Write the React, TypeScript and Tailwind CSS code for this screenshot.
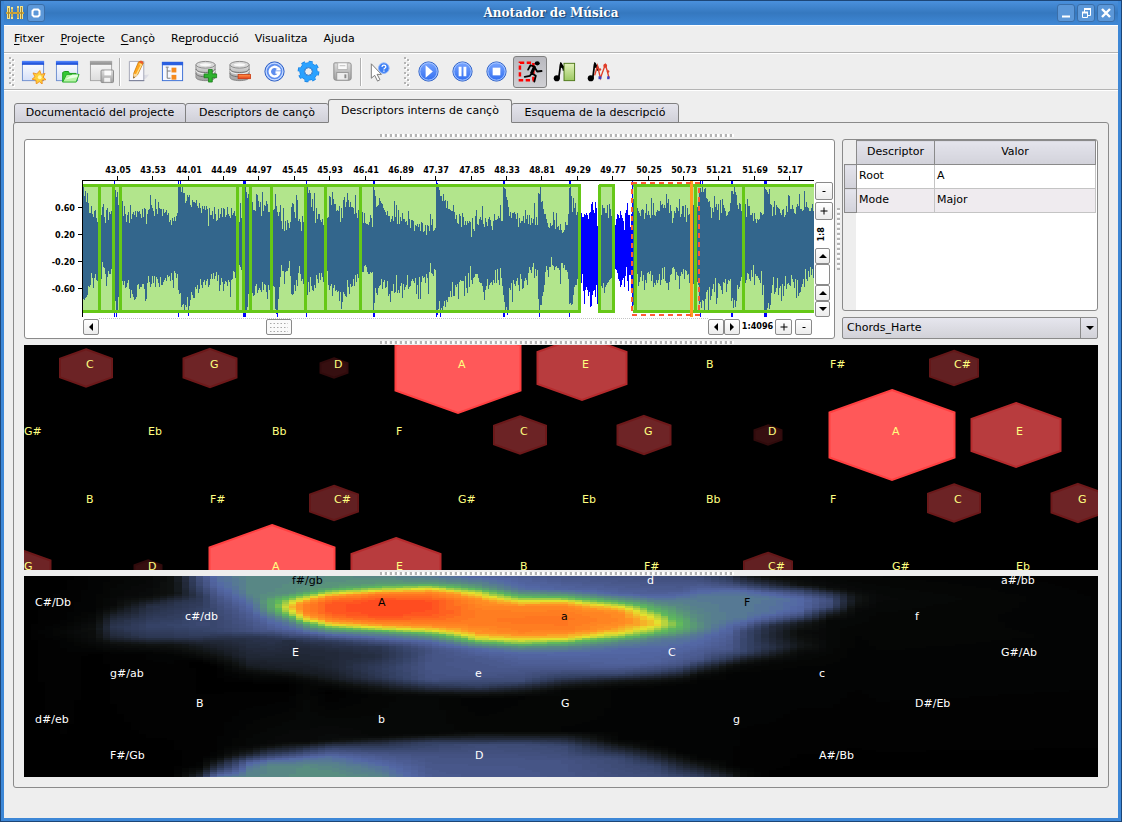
import type { ReactNode } from "react";

const MENUS: [string, string, string][] = [
  ["", "F", "itxer"],
  ["", "P", "rojecte"],
  ["", "C", "ançò"],
  ["Re", "p", "roducció"],
  ["Visualitza", "", ""],
  ["Ajuda", "", ""],
];

const TABS = [
  { label: "Documentació del projecte", width: "w-[172px]" },
  { label: "Descriptors de cançò", width: "w-[144px]" },
  { label: "Descriptors interns de cançò", width: "w-[184px]" },
  { label: "Esquema de la descripció", width: "w-[168px]" },
];
const ACTIVE_TAB = 2;

const DESCRIPTORS = [
  { name: "Root", value: "A" },
  { name: "Mode", value: "Major" },
];

/* ---------- waveform ---------- */

const WAVE_MID = 109;

// x, top, bottom of the signal envelope
const ENVELOPE: [number, number, number][] = [
  [58, 50, 164], [62, 56, 152], [67, 72, 143], [75, 76, 132], [88, 74, 135],
  [90, 44, 166], [92, 56, 172], [94, 58, 155], [98, 70, 145], [108, 74, 160], [114, 74, 148],
  [125, 66, 143], [140, 72, 143], [150, 82, 135], [152, 74, 134],
  [153, 42, 150], [156, 46, 170], [165, 60, 160], [175, 66, 146], [190, 74, 140], [203, 68, 144],
  [212, 78, 134], [218, 76, 135], [220, 40, 176], [224, 62, 152], [237, 64, 152],
  [247, 68, 146], [250, 60, 170], [252, 70, 172], [256, 82, 132], [266, 64, 156],
  [275, 76, 137], [280, 74, 150], [281, 40, 162], [285, 58, 150], [292, 74, 142], [300, 80, 138],
  [304, 58, 150], [314, 70, 165], [318, 58, 160], [324, 64, 150], [335, 74, 135],
  [346, 80, 130], [348, 40, 176], [350, 60, 155], [358, 66, 145], [365, 76, 152], [380, 80, 147],
  [400, 86, 142], [410, 84, 134], [411, 42, 176], [416, 54, 174], [424, 62, 160],
  [435, 80, 142], [450, 82, 140], [465, 80, 147], [477, 76, 142],
  [478, 40, 160], [480, 42, 176], [484, 70, 152], [495, 76, 140], [505, 78, 134],
  [513, 56, 165], [515, 44, 172], [520, 78, 134], [535, 84, 128], [543, 70, 147],
  [544, 42, 176], [547, 56, 160], [553, 76, 142], [558, 74, 154], [565, 60, 166],
  [573, 72, 148], [579, 66, 150], [587, 74, 136], [595, 72, 150], [603, 78, 138],
  [607, 52, 166], [612, 70, 140], [625, 74, 136], [635, 68, 142], [643, 66, 142],
  [660, 76, 136], [668, 62, 144], [674, 50, 166], [676, 46, 168], [684, 64, 154], [700, 68, 144],
  [706, 44, 165], [710, 48, 164], [715, 70, 142], [730, 76, 136], [737, 70, 150],
  [739, 40, 176], [742, 44, 174], [747, 70, 152], [765, 66, 142], [773, 68, 160], [780, 66, 136],
  [789, 68, 152],
];

function wavePath() {
  let seed = 7;
  const rand = () => {
    seed = (seed * 16807) % 2147483647;
    return seed / 2147483647;
  };
  let d = "";
  let k = 0;
  for (let x = 58; x < 789; x++) {
    while (k < ENVELOPE.length - 2 && ENVELOPE[k + 1][0] <= x) k++;
    const [x0, t0, b0] = ENVELOPE[k];
    const [x1, t1, b1] = ENVELOPE[k + 1];
    const f = (x - x0) / (x1 - x0);
    // attacks are sharp, only the decay is gradual
    const t = t1 < t0 - 10 ? t0 : t0 + (t1 - t0) * f;
    const b = b1 > b0 + 10 ? b0 : b0 + (b1 - b0) * f;
    const top = t + 8 - rand() * 12 - (rand() > 0.86 ? 12 : 0) + (rand() > 0.9 ? 8 : 0);
    const bottom = b - 8 + rand() * 12 + (rand() > 0.86 ? 12 : 0) - (rand() > 0.9 ? 8 : 0);
    const y0 = Math.max(41, Math.round(Math.min(top, WAVE_MID - 8)));
    const y1 = Math.min(177, Math.round(bottom));
    d += `M${x} ${y0}h1V${y1}h-1z`;
  }
  return d;
}

const WAVE = wavePath();
const TIMES = Array.from({ length: 20 }, (_, i) => (43.05 + i * 0.48).toFixed(2));
const LEVELS = ["0.60", "0.20", "-0.20", "-0.60"];
const SEGMENT_BLOCKS = [
  [58, 498],
  [574, 16],
  [608, 181],
];
const SEGMENT_EDGES = [73, 87, 94, 211, 217, 224, 245, 279, 299, 334, 553, 573, 587, 609, 669, 717];
const BLUE_SPIKES = [89, 153, 218, 219, 281, 348, 349, 411, 478, 479, 544, 675, 706, 707, 739, 740, 741];

function Waveform() {
  return (
    <svg viewBox="0 0 790 178" className="block h-auto min-w-0 flex-1" shapeRendering="crispEdges">
      <path d={WAVE} fill="#0000ff" />
      {SEGMENT_BLOCKS.map(([x, w]) => (
        <g key={x}>
          <rect x={x} y={45} width={w} height={128} fill="#66cc19" fillOpacity={0.5} />
          <rect x={x} y={44} width={w} height={3} fill="#66c817" />
          <rect x={x} y={170} width={w} height={3} fill="#66c817" />
        </g>
      ))}
      {SEGMENT_EDGES.map((x) => (
        <rect key={x} x={x} y={45} width={3} height={128} fill="#66c817" />
      ))}
      {BLUE_SPIKES.map((x) => (
        <g key={x} fill="#0000ff">
          <rect x={x} y={41} width={1} height={3} />
          <rect x={x} y={173} width={1} height={4} />
        </g>
      ))}
      <rect x={665} y={41} width={3} height={136} fill="#ff9c1f" />
      <rect x={607} y={43} width={67} height={132} fill="none" stroke="#ff5a36" strokeWidth={2} strokeDasharray="5 4" />
      <path d="M57 40h732v1H57zM57 41h1v136h-1z" fill="#000" />
      <g fontFamily="'DejaVu Sans Condensed', 'DejaVu Sans', sans-serif" fontSize={9} fontWeight={700}>
        {TIMES.map((t, i) => {
          const x = Math.round(92 + (i * 672) / 19);
          return (
            <g key={t}>
              <rect x={x} y={36} width={1} height={4} />
              <text x={x + 1} y={33} textAnchor="middle">
                {t}
              </text>
            </g>
          );
        })}
        {LEVELS.map((l, i) => (
          <g key={l}>
            <rect x={53} y={67 + i * 27} width={4} height={1} />
            <text x={50} y={71 + i * 27} textAnchor="end">
              {l}
            </text>
          </g>
        ))}
      </g>
    </svg>
  );
}

/* ---------- tonnetz ---------- */

const TONNETZ_ROWS = [
  { x: 62, y: 23, notes: ["C", "G", "D", "A", "E", "B", "F#", "C#"] },
  { x: 0, y: 90, notes: ["G#", "Eb", "Bb", "F", "C", "G", "D", "A", "E"] },
  { x: 62, y: 158, notes: ["B", "F#", "C#", "G#", "Eb", "Bb", "F", "C", "G"] },
  { x: 0, y: 225, notes: ["G", "D", "A", "E", "B", "F#", "C#", "G#", "Eb"] },
];

const HEX: Record<string, { r: number; fill: string; stroke: string }> = {
  A: { r: 62.5, fill: "#ff5859", stroke: "#ff4041" },
  E: { r: 44.5, fill: "#b83c3e", stroke: "#b52b2d" },
  C: { r: 26, fill: "#6c2325", stroke: "#6b191a" },
  G: { r: 26.5, fill: "#6e2426", stroke: "#6d191a" },
  "C#": { r: 24, fill: "#622022", stroke: "#631718" },
  D: { r: 13.5, fill: "#360f10", stroke: "#300b0c" },
};

function hexPoints(x: number, y: number, r: number) {
  const h = r * 0.72;
  const s = r * 0.36;
  return `${x},${y - h} ${x + r},${y - s} ${x + r},${y + s} ${x},${y + h} ${x - r},${y + s} ${x - r},${y - s}`;
}

function Tonnetz() {
  const cells = TONNETZ_ROWS.flatMap((row) =>
    row.notes.map((note, i) => ({ note, x: row.x + i * 124, y: row.y }))
  );
  return (
    <svg
      viewBox="0 0 1074 225"
      className="block h-auto w-full bg-black"
      fontFamily="'DejaVu Sans', sans-serif"
      fontSize={11}
    >
      {cells.map(({ note, x, y }) => {
        const hex = HEX[note];
        if (!hex) return null;
        return (
          <polygon
            key={`${x}-${y}`}
            points={hexPoints(x, y, hex.r)}
            fill={hex.fill}
            stroke={hex.stroke}
            strokeWidth={2}
          />
        );
      })}
      {cells.map(({ note, x, y }) => (
        <text key={`${x}-${y}`} x={x} y={y} fill="#ffff80">
          {note}
        </text>
      ))}
    </svg>
  );
}

/* ---------- key space ---------- */

// column x, then [y, strength] stops from top to bottom
const FIELD: [number, number[][]][] = [
  [0, [[0, 0], [201, 0]]],
  [40, [[0, 0], [46, 0.02], [56, 0.05], [66, 0.02], [201, 0]]],
  [70, [[0, 0.02], [35, 0.03], [52, 0.1], [62, 0.09], [69, 0.05], [80, 0], [201, 0]]],
  [88, [[0, 0.03], [30, 0.06], [44, 0.26], [52, 0.31], [60, 0.25], [68, 0.1], [78, 0.01], [201, 0]]],
  [126, [[0, 0.05], [20, 0.08], [30, 0.28], [50, 0.39], [61, 0.33], [69, 0.12], [78, 0.02], [201, 0]]],
  [150, [[0, 0.12], [18, 0.12], [26, 0.3], [50, 0.4], [61, 0.33], [69, 0.13], [80, 0.02], [201, 0]]],
  [176, [[0, 0.48], [10, 0.42], [20, 0.33], [30, 0.36], [48, 0.43], [60, 0.36], [68, 0.2], [76, 0.12], [86, 0], [190, 0.02], [201, 0.25]]],
  [193, [[0, 0.6], [10, 0.57], [22, 0.48], [35, 0.42], [55, 0.41], [65, 0.25], [80, 0.13], [90, 0], [180, 0.02], [192, 0.3], [198, 0.52], [201, 0.6]]],
  [226, [[0, 0.66], [18, 0.66], [28, 0.59], [45, 0.5], [55, 0.46], [62, 0.3], [80, 0.24], [90, 0.18], [98, 0.06], [108, 0], [170, 0.05], [178, 0.2], [186, 0.55], [192, 0.63], [201, 0.66]]],
  [248, [[0, 0.66], [18, 0.67], [26, 0.74], [34, 0.72], [42, 0.61], [54, 0.52], [62, 0.32], [80, 0.24], [92, 0.19], [101, 0.05], [110, 0], [168, 0.06], [178, 0.35], [185, 0.6], [190, 0.66], [201, 0.66]]],
  [266, [[0, 0.66], [17, 0.68], [24, 0.8], [31, 0.86], [38, 0.8], [46, 0.64], [53, 0.57], [60, 0.44], [65, 0.27], [80, 0.24], [94, 0.19], [102, 0.05], [110, 0], [166, 0.07], [175, 0.3], [183, 0.58], [190, 0.66], [201, 0.67]]],
  [281, [[0, 0.66], [15, 0.69], [22, 0.83], [28, 0.93], [36, 0.93], [43, 0.85], [49, 0.7], [56, 0.57], [63, 0.36], [70, 0.26], [85, 0.23], [98, 0.17], [106, 0.04], [166, 0.06], [174, 0.35], [182, 0.59], [190, 0.67], [201, 0.68]]],
  [306, [[0, 0.67], [11, 0.69], [17, 0.82], [22, 0.94], [28, 0.99], [36, 0.99], [42, 0.95], [49, 0.84], [54, 0.7], [60, 0.55], [66, 0.33], [76, 0.25], [90, 0.24], [102, 0.17], [110, 0.05], [116, 0], [164, 0.08], [172, 0.4], [181, 0.6], [190, 0.66], [201, 0.68]]],
  [356, [[0, 0.66], [8, 0.7], [14, 0.83], [19, 0.95], [25, 1], [39, 1], [44, 0.97], [48, 0.91], [53, 0.82], [57, 0.69], [63, 0.55], [71, 0.33], [80, 0.28], [92, 0.36], [102, 0.33], [112, 0.14], [119, 0.04], [160, 0.05], [168, 0.3], [178, 0.49], [190, 0.6], [201, 0.66]]],
  [406, [[0, 0.62], [7, 0.7], [12, 0.83], [18, 0.94], [26, 1], [38, 0.99], [44, 0.96], [50, 0.91], [55, 0.83], [60, 0.7], [66, 0.57], [74, 0.47], [90, 0.49], [104, 0.47], [113, 0.25], [120, 0.05], [158, 0.05], [167, 0.38], [180, 0.48], [201, 0.52]]],
  [454, [[0, 0.56], [11, 0.7], [17, 0.83], [24, 0.91], [36, 0.94], [48, 0.94], [58, 0.89], [63, 0.82], [68, 0.7], [73, 0.58], [82, 0.51], [100, 0.49], [110, 0.38], [118, 0.12], [123, 0.02], [155, 0.04], [163, 0.25], [169, 0.44], [185, 0.49], [201, 0.5]]],
  [496, [[0, 0.52], [13, 0.6], [20, 0.74], [25, 0.84], [31, 0.92], [44, 0.95], [56, 0.93], [62, 0.87], [67, 0.79], [72, 0.66], [78, 0.57], [92, 0.51], [105, 0.44], [114, 0.18], [121, 0.03], [155, 0.04], [162, 0.22], [168, 0.43], [185, 0.49], [201, 0.5]]],
  [540, [[0, 0.49], [13, 0.56], [19, 0.7], [25, 0.84], [30, 0.92], [42, 0.95], [54, 0.94], [61, 0.87], [66, 0.78], [71, 0.66], [77, 0.58], [92, 0.51], [101, 0.38], [108, 0.18], [115, 0.04], [155, 0.03], [162, 0.22], [170, 0.42], [185, 0.48], [201, 0.49]]],
  [596, [[0, 0.47], [17, 0.55], [24, 0.7], [30, 0.83], [36, 0.91], [46, 0.92], [54, 0.88], [60, 0.8], [66, 0.66], [73, 0.58], [90, 0.54], [98, 0.42], [105, 0.15], [112, 0.03], [164, 0.03], [173, 0.22], [182, 0.42], [201, 0.46]]],
  [631, [[0, 0.46], [18, 0.54], [26, 0.66], [34, 0.75], [42, 0.84], [49, 0.86], [57, 0.76], [63, 0.64], [72, 0.58], [88, 0.54], [96, 0.4], [104, 0.13], [110, 0.03], [170, 0.03], [182, 0.25], [190, 0.4], [201, 0.45]]],
  [656, [[0, 0.44], [15, 0.53], [24, 0.63], [38, 0.7], [48, 0.76], [56, 0.71], [62, 0.62], [72, 0.57], [88, 0.5], [95, 0.33], [103, 0.1], [108, 0.03], [176, 0.02], [189, 0.22], [201, 0.42]]],
  [676, [[0, 0.42], [14, 0.56], [20, 0.62], [40, 0.66], [52, 0.68], [60, 0.6], [72, 0.55], [84, 0.48], [92, 0.25], [99, 0.07], [105, 0.03], [182, 0.02], [201, 0.36]]],
  [706, [[0, 0.3], [8, 0.44], [15, 0.59], [22, 0.63], [44, 0.62], [50, 0.58], [60, 0.53], [74, 0.49], [83, 0.32], [90, 0.1], [97, 0.03], [190, 0.02], [201, 0.2]]],
  [721, [[0, 0.16], [8, 0.36], [15, 0.58], [22, 0.63], [42, 0.62], [49, 0.54], [55, 0.42], [66, 0.4], [76, 0.4], [83, 0.2], [90, 0.05], [97, 0.03], [190, 0.01], [201, 0.06]]],
  [746, [[0, 0.06], [10, 0.3], [17, 0.56], [22, 0.62], [38, 0.6], [44, 0.5], [50, 0.28], [60, 0.24], [72, 0.3], [79, 0.18], [86, 0.05], [94, 0.03], [190, 0.01], [201, 0]]],
  [776, [[0, 0.04], [9, 0.12], [15, 0.4], [22, 0.58], [34, 0.57], [40, 0.46], [47, 0.18], [56, 0.08], [70, 0.15], [78, 0.06], [90, 0.03], [201, 0]]],
  [806, [[0, 0.03], [12, 0.08], [18, 0.32], [24, 0.46], [31, 0.42], [38, 0.18], [45, 0.05], [72, 0.05], [90, 0.03], [201, 0]]],
  [831, [[0, 0.03], [14, 0.06], [20, 0.13], [26, 0.13], [34, 0.06], [60, 0.03], [201, 0]]],
  [856, [[0, 0.03], [22, 0.06], [40, 0.04], [201, 0]]],
  [1074, [[0, 0.01], [60, 0.03], [201, 0]]],
];

const PALETTE: [number, number, number, number][] = [
  [0, 0, 0, 0],
  [0.12, 15, 18, 17],
  [0.25, 34, 41, 57],
  [0.38, 52, 65, 100],
  [0.5, 72, 87, 138],
  [0.58, 84, 104, 166],
  [0.67, 88, 138, 130],
  [0.76, 92, 184, 92],
  [0.84, 230, 226, 46],
  [0.9, 255, 146, 36],
  [0.95, 255, 118, 32],
  [1, 255, 76, 32],
];

const LEVEL_COUNT = 80;
const CELL_W = 7.16;

function sampleColumn(stops: number[][], y: number) {
  let i = 0;
  while (i < stops.length - 2 && stops[i + 1][0] <= y) i++;
  const [y0, v0] = stops[i];
  const [y1, v1] = stops[i + 1];
  return v0 + ((v1 - v0) * (y - y0)) / (y1 - y0);
}

function heatColor(v: number) {
  let i = 0;
  while (i < PALETTE.length - 2 && PALETTE[i + 1][0] <= v) i++;
  const a = PALETTE[i];
  const b = PALETTE[i + 1];
  const f = (v - a[0]) / (b[0] - a[0]);
  const mix = (n: 1 | 2 | 3) => Math.round(a[n] + (b[n] - a[n]) * f);
  return `rgb(${mix(1)} ${mix(2)} ${mix(3)})`;
}

function heatPaths() {
  const paths: string[] = Array(LEVEL_COUNT + 1).fill("");
  for (let y = 0; y < 201; y += 2) {
    let start = 0;
    let level = -1;
    for (let c = 0; c <= 150; c++) {
      let next = -2;
      if (c < 150) {
        const x = (c + 0.5) * CELL_W;
        let k = 0;
        while (k < FIELD.length - 2 && FIELD[k + 1][0] <= x) k++;
        const f = (x - FIELD[k][0]) / (FIELD[k + 1][0] - FIELD[k][0]);
        const v = sampleColumn(FIELD[k][1], y + 1) * (1 - f) + sampleColumn(FIELD[k + 1][1], y + 1) * f;
        next = Math.round(v * LEVEL_COUNT);
      }
      if (next !== level) {
        if (level > 0) {
          const x0 = Math.round(start * CELL_W);
          const x1 = Math.round(c * CELL_W);
          paths[level] += `M${x0} ${y}H${x1}v2H${x0}z`;
        }
        level = next;
        start = c;
      }
    }
  }
  return paths;
}

const HEAT = heatPaths();

const KEYS: [string, number, number, string?][] = [
  ["f#/gb", 268, 8, "#000"], ["d", 623, 8], ["a#/bb", 977, 8],
  ["C#/Db", 11, 30], ["A", 354, 30, "#000"], ["F", 720, 30, "#000"],
  ["c#/db", 161, 44], ["a", 537, 44, "#000"], ["f", 891, 44],
  ["E", 268, 80], ["C", 644, 80], ["G#/Ab", 977, 80],
  ["g#/ab", 86, 101], ["e", 451, 101], ["c", 795, 101],
  ["B", 172, 131], ["G", 537, 131], ["D#/Eb", 891, 131],
  ["d#/eb", 11, 147], ["b", 354, 147], ["g", 709, 147],
  ["F#/Gb", 86, 183], ["D", 451, 183], ["A#/Bb", 795, 183],
];

function KeySpace() {
  return (
    <svg
      viewBox="0 0 1074 201"
      className="block h-auto w-full bg-black"
      fontFamily="'DejaVu Sans', sans-serif"
      fontSize={11}
    >
      <g shapeRendering="crispEdges">
        {HEAT.map((d, i) => (d ? <path key={i} d={d} fill={heatColor(i / LEVEL_COUNT)} /> : null))}
      </g>
      {KEYS.map(([name, x, y, fill]) => (
        <text key={name} x={x} y={y} fill={fill ?? "#fff"}>
          {name}
        </text>
      ))}
    </svg>
  );
}

/* ---------- icons ---------- */

function Icon({ children }: { children: ReactNode }) {
  return (
    <svg viewBox="0 0 26 26" className="h-[25px] w-[25px]">
      {children}
    </svg>
  );
}

function WindowShape({ gray = false }: { gray?: boolean }) {
  return (
    <>
      <rect x="1.5" y="2.5" width="22" height="20" fill={gray ? "url(#pageGray)" : "url(#page)"} stroke={gray ? "#a4a4a4" : "#6f8fcf"} />
      <rect x="1" y="2" width="23" height="4" fill={gray ? "url(#barGray)" : "url(#bar)"} />
    </>
  );
}

function Ball({ children }: { children: ReactNode }) {
  return (
    <>
      <circle cx="13" cy="13" r="10" fill="url(#ball)" stroke="#2d5fc4" />
      <circle cx="13" cy="13" r="9" fill="none" stroke="#a9c8ff" />
      {children}
    </>
  );
}

function Disks() {
  return (
    <>
      <path d="M2 6v13c0 2 4 3.500 10 3.500s10-1.500 10-3.500V6z" fill="url(#steel)" stroke="#777" strokeWidth=".8" />
      <path d="M2 10.500c1 2.500 5 3.500 10 3.500s9-1 10-3.500M2 15c1 2.500 5 3.500 10 3.500s9-1 10-3.500" fill="none" stroke="#6d6d6d" />
      <path d="M2 12c1 2.500 5 3.500 10 3.500s9-1 10-3.500" fill="none" stroke="#f6f6f6" />
      <ellipse cx="12" cy="6" rx="10" ry="3.500" fill="#d9d9d9" stroke="#8a8a8a" />
      <ellipse cx="12" cy="6" rx="6" ry="1.600" fill="#f8f8f8" />
    </>
  );
}

function Floppy() {
  return (
    <>
      <path d="M4 5q0-1 1-1h15q2 0 2 2v14q0 2-2 2H6q-2 0-2-2z" fill="url(#steel)" stroke="#8b8b8b" />
      <rect x="8" y="4" width="10" height="7" fill="#fafafa" stroke="#b5b5b5" />
      <path d="M10 7h6" stroke="#bbb" />
      <rect x="7" y="14" width="12" height="8" fill="#ededed" stroke="#999" />
      <rect x="15" y="16" width="2" height="4" fill="#888" />
    </>
  );
}

function Note() {
  return (
    <>
      <ellipse cx="5" cy="20" rx="3.200" ry="3.200" fill="#000" />
      <path d="M7 20 9 5" fill="none" stroke="#000" strokeWidth="1.800" />
      <path d="m8.500 3 1.500 1q1 2.500 2.500 3.500 1.500 1.500-.5 5l-1-.5q.5-2-1-3L8 9z" fill="#000" />
    </>
  );
}

const ICONS = {
  newWindow: (
    <Icon>
      <WindowShape />
      <path d="m19.500 12 1.500 4 4-1-2 4 3 2.500-4 .5v4l-3-2.500-3 2.500-.5-4-4-1 3-2.500-2-4 4 1z" fill="#ffcf3a" stroke="#f08c1a" strokeWidth=".9" />
      <circle cx="19.500" cy="19" r="2" fill="#fff8b0" />
    </Icon>
  ),
  openWindow: (
    <Icon>
      <WindowShape />
      <path d="M8 24V14l2-1h4l1 2h7v2" fill="#35c935" stroke="#189818" />
      <path d="m8 24 4-8h13l-3 8z" fill="#b6f3a6" stroke="#27ae27" />
      <path d="m11 21 7-5h6l-1 3z" fill="#e8ffe2" />
    </Icon>
  ),
  saveWindow: (
    <Icon>
      <WindowShape gray />
      <rect x="12.500" y="11.500" width="13" height="13" rx="1" fill="url(#steel)" stroke="#8b8b8b" />
      <rect x="16" y="12" width="7" height="5" fill="#fafafa" />
      <rect x="15.500" y="19" width="7" height="5" fill="#f2f2f2" stroke="#aaa" strokeWidth=".6" />
    </Icon>
  ),
  edit: (
    <Icon>
      <path d="m17 17 7-1-3 4-4 2z" fill="#dcdce4" />
      <path d="M3.500 2.500h15v20h-15z" fill="#f8f8fd" stroke="#a3a5b5" />
      <path d="M3 22.500h16" stroke="#777c96" />
      <path d="m8 15 5-12q3-2 5 1l-6 12.500L8 20z" fill="#ffa61f" stroke="#c77400" strokeWidth=".8" />
      <path d="m13.500 3.500 1-1.500q2.500-1 3.500 1.500l-.8 1.700z" fill="#e9582e" />
      <path d="m14 5 2 1-5.500 11" fill="none" stroke="#ffe08a" strokeWidth="1.300" />
      <path d="m8 15 4 1.500L8 20z" fill="#f5d9a8" />
      <path d="m8 18 1 1-1.200 1z" fill="#222" />
    </Icon>
  ),
  tree: (
    <Icon>
      <rect x="2.500" y="3.500" width="21" height="19" fill="#f6f8ff" stroke="#3c6fd6" />
      <rect x="2" y="3" width="22" height="3.500" fill="#2a5fe0" />
      <path d="M6 8.500h3M7.500 9v11H11M7.500 12.500H11" fill="none" stroke="#777" />
      <rect x="12" y="9" width="5" height="5" fill="#f58a1f" />
      <rect x="12" y="16.500" width="5" height="5" fill="#f58a1f" />
    </Icon>
  ),
  dbAdd: (
    <Icon>
      <Disks />
      <path d="M15 11h4v4.500h4.500v4H19V24h-4v-4.500h-4.500v-4H15z" fill="#2fb22f" stroke="#157a15" strokeWidth=".8" />
    </Icon>
  ),
  dbRemove: (
    <Icon>
      <Disks />
      <rect x="10.500" y="16" width="13" height="4.500" fill="url(#minus)" stroke="#c9370f" strokeWidth=".8" />
    </Icon>
  ),
  refresh: (
    <Icon>
      <circle cx="13" cy="13" r="10" fill="#5f8eee" stroke="#2d5fc4" />
      <circle cx="13" cy="13" r="8.700" fill="none" stroke="#c8dcff" strokeWidth="1.200" />
      <path d="M16.500 9.500a5 5 0 1 0 1.500 4.500h-4" fill="none" stroke="#fff" strokeWidth="2.600" />
      <path d="M14 12h5.500v-1l-2-3z" fill="#fff" />
    </Icon>
  ),
  gear: (
    <Icon>
      <circle cx="13" cy="13" r="9.800" fill="none" stroke="#1d83e2" strokeWidth="3" strokeDasharray="3.850 3.850" />
      <circle cx="13" cy="13" r="6.800" fill="none" stroke="#1d83e2" strokeWidth="5.500" />
      <circle cx="13" cy="13" r="9.200" fill="none" stroke="#2ba2ff" strokeWidth="2.500" strokeDasharray="3.610 3.610" />
      <circle cx="13" cy="13" r="6.800" fill="none" stroke="#2ba2ff" strokeWidth="4" />
      <circle cx="13" cy="13" r="4" fill="#eee" stroke="#1b74d0" />
    </Icon>
  ),
  save: (
    <Icon>
      <Floppy />
    </Icon>
  ),
  help: (
    <Icon>
      <path d="M4.500 5v15l3.500-3 3 6 2.500-1.500-3-5.500H15z" fill="#fff" stroke="#777" />
      <circle cx="17.500" cy="9.500" r="5.500" fill="#3f80f4" stroke="#8fb5fa" />
      <path d="M15.600 8.200q0-1.800 2-1.800t2 1.600q0 1-1.200 1.600-.8.500-.8 1.400M17.600 12v1.300" fill="none" stroke="#fff" strokeWidth="1.300" />
    </Icon>
  ),
  play: (
    <Icon>
      <Ball>
        <path d="m10 6.500 7.500 6.500L10 19.500z" fill="#fff" />
      </Ball>
    </Icon>
  ),
  pause: (
    <Icon>
      <Ball>
        <path d="M9 8h3v10H9zM14 8h3v10h-3z" fill="#fff" />
      </Ball>
    </Icon>
  ),
  stop: (
    <Icon>
      <Ball>
        <path d="M9 9h8v8H9z" fill="#fff" />
      </Ball>
    </Icon>
  ),
  follow: (
    <Icon>
      <rect x="2" y="4" width="14" height="18" fill="none" stroke="#f00" strokeWidth="2.600" strokeDasharray="4.500 2.600" />
      <ellipse cx="20" cy="4.500" rx="2.600" ry="2.200" fill="#000" />
      <path d="M17.500 8 14 15M17 8l-4-1.500-2.500 4.500M17.500 9l2.500 4 4.500-.5M14 15l-1.500 2.500L7 18.500M14.500 15l4 2.500-1.500 6" fill="none" stroke="#000" strokeWidth="1.900" strokeLinecap="round" strokeLinejoin="round" />
      <path d="m16 7 2.500 1.500-3 7-3-1z" fill="#000" />
    </Icon>
  ),
  segment: (
    <Icon>
      <Note />
      <rect x="12.500" y="4.500" width="11" height="18" fill="url(#leaf)" stroke="#517a1c" />
    </Icon>
  ),
  curve: (
    <Icon>
      <Note />
      <path d="m9 17 3-10 3 13 5-14 2 6 2 8" fill="none" stroke="#e03c28" strokeWidth="1.400" />
      <g fill="#3c3cc0">
        <rect x="13" y="18" width="3" height="3" />
        <rect x="22" y="18" width="2.500" height="3" />
      </g>
      <g fill="#e03c28">
        <circle cx="20" cy="7" r="2" />
        <circle cx="14.500" cy="11" r="1.300" />
        <circle cx="23" cy="13" r="1.300" />
      </g>
    </Icon>
  ),
};

type IconName = keyof typeof ICONS;

const FILE_TOOLS: { icon: IconName; label: string }[] = [
  { icon: "newWindow", label: "Nou projecte" },
  { icon: "openWindow", label: "Obre projecte" },
  { icon: "saveWindow", label: "Desa projecte" },
];
const SONG_TOOLS: { icon: IconName; label: string }[] = [
  { icon: "edit", label: "Edita" },
  { icon: "tree", label: "Esquema" },
  { icon: "dbAdd", label: "Afegeix cançó" },
  { icon: "dbRemove", label: "Elimina cançó" },
  { icon: "refresh", label: "Actualitza" },
  { icon: "gear", label: "Extreu descriptors" },
  { icon: "save", label: "Desa descriptors" },
];
const PLAY_TOOLS: { icon: IconName; label: string }[] = [
  { icon: "play", label: "Reprodueix" },
  { icon: "pause", label: "Pausa" },
  { icon: "stop", label: "Atura" },
  { icon: "follow", label: "Segueix" },
  { icon: "segment", label: "Sona segments" },
  { icon: "curve", label: "Sona corba" },
];

function ToolButton({ icon, label }: { icon: IconName; label: string }) {
  const pressed = icon === "follow";
  return (
    <button
      type="button"
      aria-label={label}
      aria-pressed={pressed}
      className={`flex h-8 w-[34px] items-center justify-center rounded-[3px] ${
        pressed ? "border border-[#808080] bg-linear-to-b from-[#b9b9bf] to-[#d0d0d4]" : ""
      }`}
    >
      {ICONS[icon]}
    </button>
  );
}

function Grip() {
  return (
    <svg viewBox="0 0 6 30" className="h-[30px] w-[6px]" shapeRendering="crispEdges">
      {[0, 5, 10, 15, 20, 25].map((y) => (
        <g key={y}>
          <path d={`M1 ${y + 1}h2v2H1zM4 ${y + 3}h2v2H4z`} fill="#fff" />
          <path d={`M0 ${y}h2v2H0zM3 ${y + 2}h2v2H3z`} fill="#b4b4b4" />
        </g>
      ))}
    </svg>
  );
}

function Divider() {
  return <div className="ml-px h-7 w-[2px] border-l border-[#b0b0b0] bg-white" />;
}

function Splitter({ height }: { height: string }) {
  return (
    <div className={`flex items-center justify-center pr-[9px] ${height}`}>
      <div className="h-[3px] w-[354px] bg-[repeating-linear-gradient(90deg,#b4b4b4_0_2px,#ffffff_2px_4px,transparent_4px_5px)]" />
    </div>
  );
}

function TitleButton({ label, children }: { label: string; children: ReactNode }) {
  return (
    <button
      type="button"
      aria-label={label}
      className="flex h-[18px] w-[18px] items-center justify-center rounded-[3px] border border-[#3a6ea8] bg-[#5b97d8]"
    >
      <svg viewBox="0 0 16 16" className="h-4 w-4">
        {children}
      </svg>
    </button>
  );
}

type SmallButtonProps = { label: string; size: string; children?: ReactNode };

function SmallButton({ label, size, children }: SmallButtonProps) {
  return (
    <button
      type="button"
      aria-label={label}
      className={`flex items-center justify-center rounded-[2px] border border-[#8a8a8a] bg-linear-to-b from-white to-[#ececec] ${size}`}
    >
      <svg viewBox="0 0 10 10" className="h-[10px] w-[10px]">
        {children}
      </svg>
    </button>
  );
}

const PLUS = <path d="M5 1.500v7M1.500 5h7" stroke="#000" />;
const MINUS = <path d="M3.500 5.500h3" stroke="#000" />;
const UP = <path d="M1 7h8L5 3z" />;
const DOWN = <path d="M1 3h8L5 7z" />;
const LEFT = <path d="M7 1v8L3 5z" />;
const RIGHT = <path d="M3 1v8l4-4z" />;

function WavePanel() {
  return (
    <section className="min-w-0 flex-1 rounded-[3px] border border-[#8a8a8a] bg-white">
      <div className="flex">
        <Waveform />
        <div className="flex w-[19px] shrink-0 flex-col items-start pt-[42px]">
          <SmallButton label="Redueix vertical" size="h-[18px] w-[18px]">{MINUS}</SmallButton>
          <div className="h-[2px]" />
          <SmallButton label="Amplia vertical" size="h-[18px] w-[18px]">{PLUS}</SmallButton>
          <div className="flex h-[28px] w-[11px] items-center justify-center">
            <span className="rotate-180 font-['DejaVu_Sans_Condensed','DejaVu_Sans',sans-serif] text-[9px] leading-3 font-bold [writing-mode:vertical-rl]">1:8</span>
          </div>
          <SmallButton label="Amunt" size="h-4 w-[15px]">{UP}</SmallButton>
          <div className="h-[21px] w-[15px] rounded-[2px] border border-[#8a8a8a] bg-white" />
          <SmallButton label="Puja" size="h-4 w-[15px]">{UP}</SmallButton>
          <SmallButton label="Baixa" size="h-4 w-[15px]">{DOWN}</SmallButton>
        </div>
      </div>
      <div className="flex h-5 items-start pr-[22px] pl-[58px]">
        <SmallButton label="Esquerra" size="mt-px h-4 w-4">{LEFT}</SmallButton>
        <div className="flex h-[18px] flex-1 border-t border-dotted border-[#c4c4c4]">
          <div className="grow-[167]" />
          <div className="flex h-4 w-[26px] items-center justify-center rounded-[2px] border border-[#8a8a8a] bg-[#fafafa]">
            <svg viewBox="0 0 20 10" className="h-[10px] w-5">
              <path d="M1 1.500h18M1 5.500h18M1 9.500h18" stroke="#a8a8a8" strokeDasharray="1.500 2" />
            </svg>
          </div>
          <div className="grow-[416]" />
        </div>
        <SmallButton label="Anterior" size="mt-px h-4 w-4">{LEFT}</SmallButton>
        <SmallButton label="Següent" size="mt-px h-4 w-4">{RIGHT}</SmallButton>
        <span className="w-[35px] text-center font-['DejaVu_Sans_Condensed','DejaVu_Sans',sans-serif] text-[9px] leading-4 font-bold">1:4096</span>
        <SmallButton label="Amplia" size="mt-px mr-[3px] h-4 w-[17px]">{PLUS}</SmallButton>
        <SmallButton label="Redueix" size="mt-px h-4 w-[17px]">{MINUS}</SmallButton>
      </div>
    </section>
  );
}

function DescriptorPanel() {
  const head = "border border-[#8a8a8a] bg-linear-to-b from-[#e4e4ec] to-[#d2d2da]";
  return (
    <aside className="flex w-64 shrink-0 flex-col gap-[6px]">
      <div className="flex flex-1 flex-col rounded-[3px] border border-[#8a8a8a] bg-[linear-gradient(90deg,#eeeeee_0_13px,#ffffff_13px)] px-px">
        <table className="w-full table-fixed border-collapse">
          <colgroup>
            <col className="w-3" />
            <col className="w-[78px]" />
            <col />
          </colgroup>
          <thead>
            <tr className="h-6">
              <td />
              <th className={`pb-px font-normal ${head}`}>Descriptor</th>
              <th className={`pb-px font-normal ${head}`}>Valor</th>
            </tr>
          </thead>
          <tbody>
            {DESCRIPTORS.map((row, i) => (
              <tr key={row.name} className={i % 2 ? "h-6 bg-[#efebef]" : "h-6 bg-white"}>
                <td className={head} />
                <td className="border border-[#c4c4c4] px-[2px] pb-px">{row.name}</td>
                <td className="border border-[#c4c4c4] px-[2px] pb-px">{row.value}</td>
              </tr>
            ))}
          </tbody>
        </table>
      </div>
      <div className="grid">
        <select
          aria-label="Segmentació"
          className="col-start-1 row-start-1 h-[22px] w-full appearance-none rounded-[2px] border border-[#8a8a8a] bg-linear-to-b from-[#e6e6ee] to-[#d2d2d8] pl-1"
        >
          <option>Chords_Harte</option>
        </select>
        <div className="pointer-events-none col-start-1 row-start-1 my-px flex w-[18px] items-center justify-center self-stretch justify-self-end border-l border-[#8a8a8a]">
          <svg viewBox="0 0 10 10" className="h-[10px] w-[10px]">{DOWN}</svg>
        </div>
      </div>
    </aside>
  );
}

function Gradients() {
  const defs: [string, string, string][] = [
    ["page", "#ffffff", "#d5e0f8"],
    ["pageGray", "#fafafa", "#dcdcdc"],
    ["bar", "#5a8cff", "#0a3ed0"],
    ["barGray", "#b0b0b0", "#8c8c8c"],
    ["ball", "#7ba6ff", "#2f6df0"],
    ["steel", "#dedede", "#9f9f9f"],
    ["minus", "#ff9a4a", "#e8401a"],
    ["leaf", "#e2f2ba", "#9cc862"],
  ];
  return (
    <svg className="h-0 w-0 shrink-0" aria-hidden="true">
      <defs>
        {defs.map(([id, from, to]) => (
          <linearGradient key={id} id={id} x1="0" y1="0" x2="0" y2="1">
            <stop offset="0" stopColor={from} />
            <stop offset="1" stopColor={to} />
          </linearGradient>
        ))}
      </defs>
    </svg>
  );
}

export default function App() {
  return (
    <div className="flex min-h-screen flex-col border border-[#1d4677] bg-[#3d87d6] px-[3px] pb-[3px] font-['DejaVu_Sans',sans-serif] text-[11px] leading-4 text-black">
      <header className="flex h-6 items-center gap-[2px] bg-linear-to-b from-[#4a90dc] via-[#3578bf] to-[#3f88d6] pr-[3px] pl-[2px]">
        <svg viewBox="0 0 18 14" className="mr-px h-[14px] w-[18px]">
          <path d="M1 0h3v13H1zM5 1h2v12H5zM11 0h2v13h-2zM14 0h3v13h-3z" fill="#f2e08a" />
          <path d="M0 6h18v2H0z" fill="#c9a53e" />
          <path d="M2.500 2v10M6 3v8M12 2v10M15.500 1v12" stroke="#a8862c" />
        </svg>
        <TitleButton label="Menú de la finestra">
          <path d="M6 4.500h4L11.500 6v4L10 11.500H6L4.500 10V6z" fill="none" stroke="#fff" strokeWidth="2" />
        </TitleButton>
        <h1 className="flex-1 text-center font-['DejaVu_Serif',serif] text-[12px] font-bold text-white [text-shadow:1px_1px_1px_#1c3f6b]">
          Anotador de Música
        </h1>
        <TitleButton label="Minimitza">
          <path d="M4 11.500h8" stroke="#fff" strokeWidth="2" />
        </TitleButton>
        <TitleButton label="Restaura">
          <path d="M4.500 7.500h5v5h-5zM6.500 7V4.500h6v6H10" fill="none" stroke="#fff" />
          <path d="M4 7.500h6M6 4h7" stroke="#fff" strokeWidth="2" />
        </TitleButton>
        <TitleButton label="Tanca">
          <path d="m4 4 8 8M12 4l-8 8" stroke="#fff" strokeWidth="2.400" />
        </TitleButton>
      </header>

      <div className="flex flex-1 flex-col border-t border-white bg-[#eeeeee]">
        <nav className="flex h-[27px] items-center gap-4 border-b border-[#b4b4b4] pl-[10px]">
          {MENUS.map(([before, key, after]) => (
            <button key={before + key + after} type="button">
              {before}
              <u className="underline-offset-2">{key}</u>
              {after}
            </button>
          ))}
        </nav>

        <div className="flex h-[37px] items-center border-t border-b border-t-white border-b-[#b4b4b4]">
          <div className="flex w-3 justify-end pr-px">
            <Grip />
          </div>
          {FILE_TOOLS.map((t) => (
            <ToolButton key={t.icon} {...t} />
          ))}
          <Divider />
          {SONG_TOOLS.map((t) => (
            <ToolButton key={t.icon} {...t} />
          ))}
          <Divider />
          <ToolButton icon="help" label="Què és això?" />
          <div className="flex w-[15px] justify-end pr-px">
            <Grip />
          </div>
          {PLAY_TOOLS.map((t) => (
            <ToolButton key={t.icon} {...t} />
          ))}
        </div>

        <main className="border-t border-white px-[9px] pt-[8px]">
          <div role="tablist" className="flex items-end pl-px">
            {TABS.map((tab, i) => {
              const active = i === ACTIVE_TAB;
              return (
                <button
                  key={tab.label}
                  type="button"
                  role="tab"
                  aria-selected={active}
                  className={`-mr-px rounded-t-[3px] border border-[#808080] whitespace-nowrap ${tab.width} ${
                    active
                      ? "z-10 -mb-px h-6 border-b-[#eeeeee] bg-[#eeeeee]"
                      : "-mb-px h-5 bg-linear-to-b from-[#e4e4ec] to-[#d0d0d8]"
                  }`}
                >
                  {tab.label}
                </button>
              );
            })}
          </div>

          <div className="rounded-[3px] border border-[#8a8a8a] px-[10px] pb-[10px]">
            <div className="pt-[8px]">
              <Splitter height="h-2" />
            </div>
            <div className="flex h-auto">
              <WavePanel />
              <div className="flex w-[7px] shrink-0 items-center justify-center">
                <div className="h-[62px] w-[3px] bg-[repeating-linear-gradient(180deg,#b4b4b4_0_2px,#ffffff_2px_4px,transparent_4px_5px)]" />
              </div>
              <DescriptorPanel />
            </div>
            <Splitter height="h-[6px]" />
            <Tonnetz />
            <Splitter height="h-[6px]" />
            <KeySpace />
          </div>
        </main>
        <Gradients />
      </div>
    </div>
  );
}
